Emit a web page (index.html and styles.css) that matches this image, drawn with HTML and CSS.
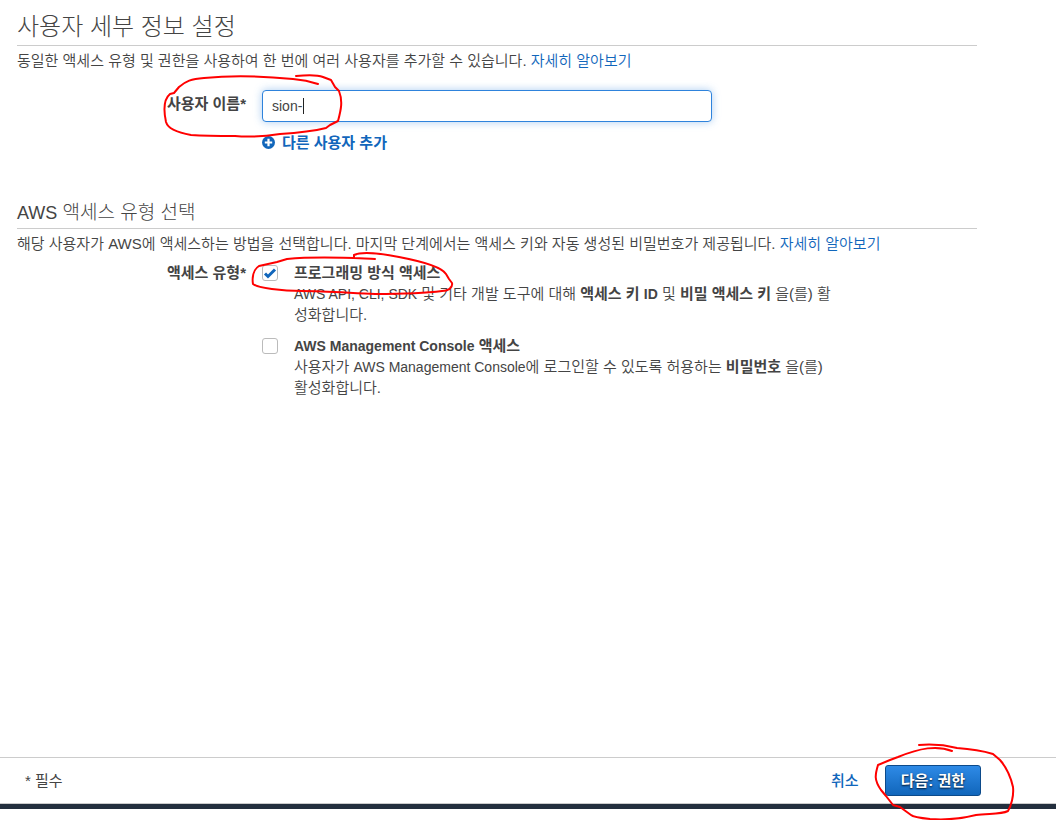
FILE: index.html
```
<!DOCTYPE html>
<html lang="ko">
<head>
    <meta charset="UTF-8">
    <meta name="viewport" content="width=device-width, initial-scale=1.0">
    <title>사용자 추가</title>
    <link rel="stylesheet" href="styles.css">
</head>
<body>

<form class="page">
    <main class="content">
        <section class="section">
            <h1>사용자 세부 정보 설정</h1>
            <p class="intro">동일한 액세스 유형 및 권한을 사용하여 한 번에 여러 사용자를 추가할 수 있습니다. <a href="#">자세히 알아보기</a></p>
            <div class="row name-row">
                <label class="row-label" for="username">사용자 이름*</label>
                <div class="field">
                    <div class="input-wrap">
                        <input type="text" id="username" value="sion-">
                        <span class="caret"></span>
                    </div>
                    <a href="#" class="add-user">
                        <svg width="14" height="14" viewBox="0 0 14 14"><circle cx="6.5" cy="6.5" r="6.5" fill="#1166bb"/><path d="M6.5 2.8v7.4M2.8 6.5h7.4" stroke="#fff" stroke-width="2.2"/></svg>
                        다른 사용자 추가
                    </a>
                </div>
                <svg class="mark mark-name" width="184" height="70" viewBox="160 70 184 70">
                    <path d="M296 76C306 75 318 75 323 77L331 80L335 87L339 91C343 101 341 110 338 121L330 125L326 128C310 132 296 133 280 134C260 137 245 137 235 136C217 136 206 136 191 135C180 133 168 129 166 122C163 108 164 99 170 94L174 93L179 87C186 81 191 79 204 78C235 75 272 77 293 79C305 80 312 82 318 84"/>
                </svg>
            </div>
        </section>

        <section class="section">
            <h2><span lang="en">AWS</span> 액세스 유형 선택</h2>
            <p class="intro">해당 사용자가 AWS에 액세스하는 방법을 선택합니다. 마지막 단계에서는 액세스 키와 자동 생성된 비밀번호가 제공됩니다. <a href="#">자세히 알아보기</a></p>
            <div class="row type-row">
                <span class="row-label" id="type-label">액세스 유형*</span>
                <div class="field options" role="group" aria-labelledby="type-label">
                    <div class="option">
                        <input type="checkbox" id="programmatic" checked>
                        <div>
                            <label for="programmatic">프로그래밍 방식 액세스</label>
                            <p><span lang="en">AWS API, CLI, SDK</span> 및 기타 개발 도구에 대해 <b>액세스 키 <span lang="en">ID</span></b> 및 <b>비밀 액세스 키</b> 을(를) 활성화합니다.</p>
                        </div>
                    </div>
                    <div class="option">
                        <input type="checkbox" id="console">
                        <div>
                            <label for="console"><span lang="en">AWS Management Console</span> 액세스</label>
                            <p>사용자가 <span lang="en">AWS Management Console</span>에 로그인할 수 있도록 허용하는 <b>비밀번호</b> 을(를) 활성화합니다.</p>
                        </div>
                    </div>
                </div>
                <svg class="mark mark-type" width="210" height="48" viewBox="248 248 210 48">
                    <path d="M354 258V255C362 251 384 254 399 257C420 261 441 266 446 274L449 279L452 283C453 288 448 291 442 291C420 294 393 294 375 294C350 293 325 291 302 291C282 291 258 288 253 284C252 278 253 270 259 266L277 262L287 259C320 256 350 258 375 259"/>
                </svg>
            </div>
        </section>
    </main>

    <footer class="footer">
        <span class="required">* 필수</span>
        <div class="actions">
            <a href="#">취소</a>
            <button type="submit">다음: 권한</button>
            <svg class="mark mark-next" width="144" height="78" viewBox="873 742 144 78">
                <path d="M919 745C931 744 945 745 957 748C972 749 980 750 993 754L1000 760C1007 768 1011 778 1013 787C1014 796 1011 806 1008 811C1000 815 987 813 976 815C960 819 943 820 930 819C920 818 913 817 911 815L900 807L893 805L886 796L881 790C874 780 875 775 878 765L890 760L898 757C920 748 937 745 952 751"/>
            </svg>
        </div>
    </footer>
    <div class="bottom-bar"></div>
</form>

</body>
</html>
```
FILE: styles.css
```
* {
    box-sizing: border-box;
}
body {
    margin: 0;
    background: #fff;
    color: #444;
    font-family: "Liberation Sans", "Noto Sans CJK KR", sans-serif;
    font-size: 15px;
    font-weight: 350;
    line-height: 21px;
}
h1, h2, p {
    margin: 0;
}
h1, h2 {
    border-bottom: 1px solid #ccc;
    font-weight: 300;
}
h1 {
    font-size: 24px;
    line-height: 36px;
}
h2 {
    font-size: 19px;
    line-height: 30px;
}
a {
    color: #1166bb;
    text-decoration: none;
}
b {
    font-weight: bold;
}
h2 [lang="en"] {
    font-size: 18px;
}
p [lang="en"], label [lang="en"] {
    font-size: 14px;
    line-height: 19px;
}
.page {
    display: flex;
    flex-direction: column;
    min-height: 100vh;
    padding-bottom: 11px;
}
.content {
    flex: 1;
    padding: 9px 79px 0 17px;
}
.section {
    margin-bottom: 45px;
}
.intro {
    padding-top: 4px;
}
.row {
    display: grid;
    grid-template-columns: 229px minmax(0, 570px);
    column-gap: 16px;
    position: relative;
}
.name-row {
    margin-top: 19px;
}
.type-row {
    margin-top: 8px;
}
.row-label {
    font-weight: bold;
    text-align: right;
}
.name-row .row-label {
    padding-top: 3px;
}
.input-wrap {
    position: relative;
    max-width: 450px;
}
.input-wrap input {
    display: block;
    width: 100%;
    height: 32px;
    padding: 0 9px;
    border: 1px solid #2e83dc;
    border-radius: 4px;
    box-shadow: 0 0 8px rgba(46, 131, 220, 0.4);
    color: #444;
    font: inherit;
    font-size: 14px;
    outline: none;
}
.caret {
    position: absolute;
    left: 41px;
    top: 8px;
    width: 1px;
    height: 16px;
    background: #222;
}
.add-user {
    display: flex;
    align-items: center;
    gap: 6px;
    margin-top: 10px;
    font-weight: bold;
}
.option {
    display: flex;
    gap: 16px;
    margin-bottom: 10px;
}
.option label {
    display: block;
    font-weight: bold;
}
.option input {
    appearance: none;
    flex: none;
    width: 16px;
    height: 16px;
    margin: 3px 0 0;
    border: 1px solid #bbb;
    border-radius: 3px;
    background: #fff;
}
.option input:checked {
    background: url("data:image/svg+xml,%3Csvg xmlns='http://www.w3.org/2000/svg' viewBox='0 0 14 14'%3E%3Cpath d='M2 7.5L5 10.5L12 3.5' fill='none' stroke='%231166bb' stroke-width='3'/%3E%3C/svg%3E") center no-repeat;
}
.footer {
    display: flex;
    justify-content: space-between;
    align-items: center;
    height: 47px;
    padding: 0 75px 0 25px;
    border-top: 1px solid #ccc;
    border-bottom: 1px solid #ccc;
}
.required {
    font-weight: 400;
}
.actions {
    display: flex;
    align-items: center;
    gap: 26px;
    position: relative;
    font-weight: bold;
}
.actions a {
    font-weight: 500;
}
.actions button {
    height: 31px;
    padding: 0 15px;
    border: 1px solid #0c4a8a;
    border-radius: 3px;
    background: linear-gradient(#2e8ae6, #1166bb);
    color: #fff;
    font: inherit;
    text-shadow: 0 1px 2px #012;
}
.bottom-bar {
    height: 5px;
    background: #232f3e;
}
/* pen marks drawn over the form */
.mark {
    position: absolute;
    pointer-events: none;
    fill: none;
    stroke: #f00;
    stroke-width: 2;
    stroke-linecap: round;
    stroke-linejoin: round;
}
.mark-name {
    left: 143px;
    top: -20px;
}
.mark-type {
    left: 231px;
    top: -14px;
}
.mark-next {
    right: -36px;
    top: -23px;
}
```
